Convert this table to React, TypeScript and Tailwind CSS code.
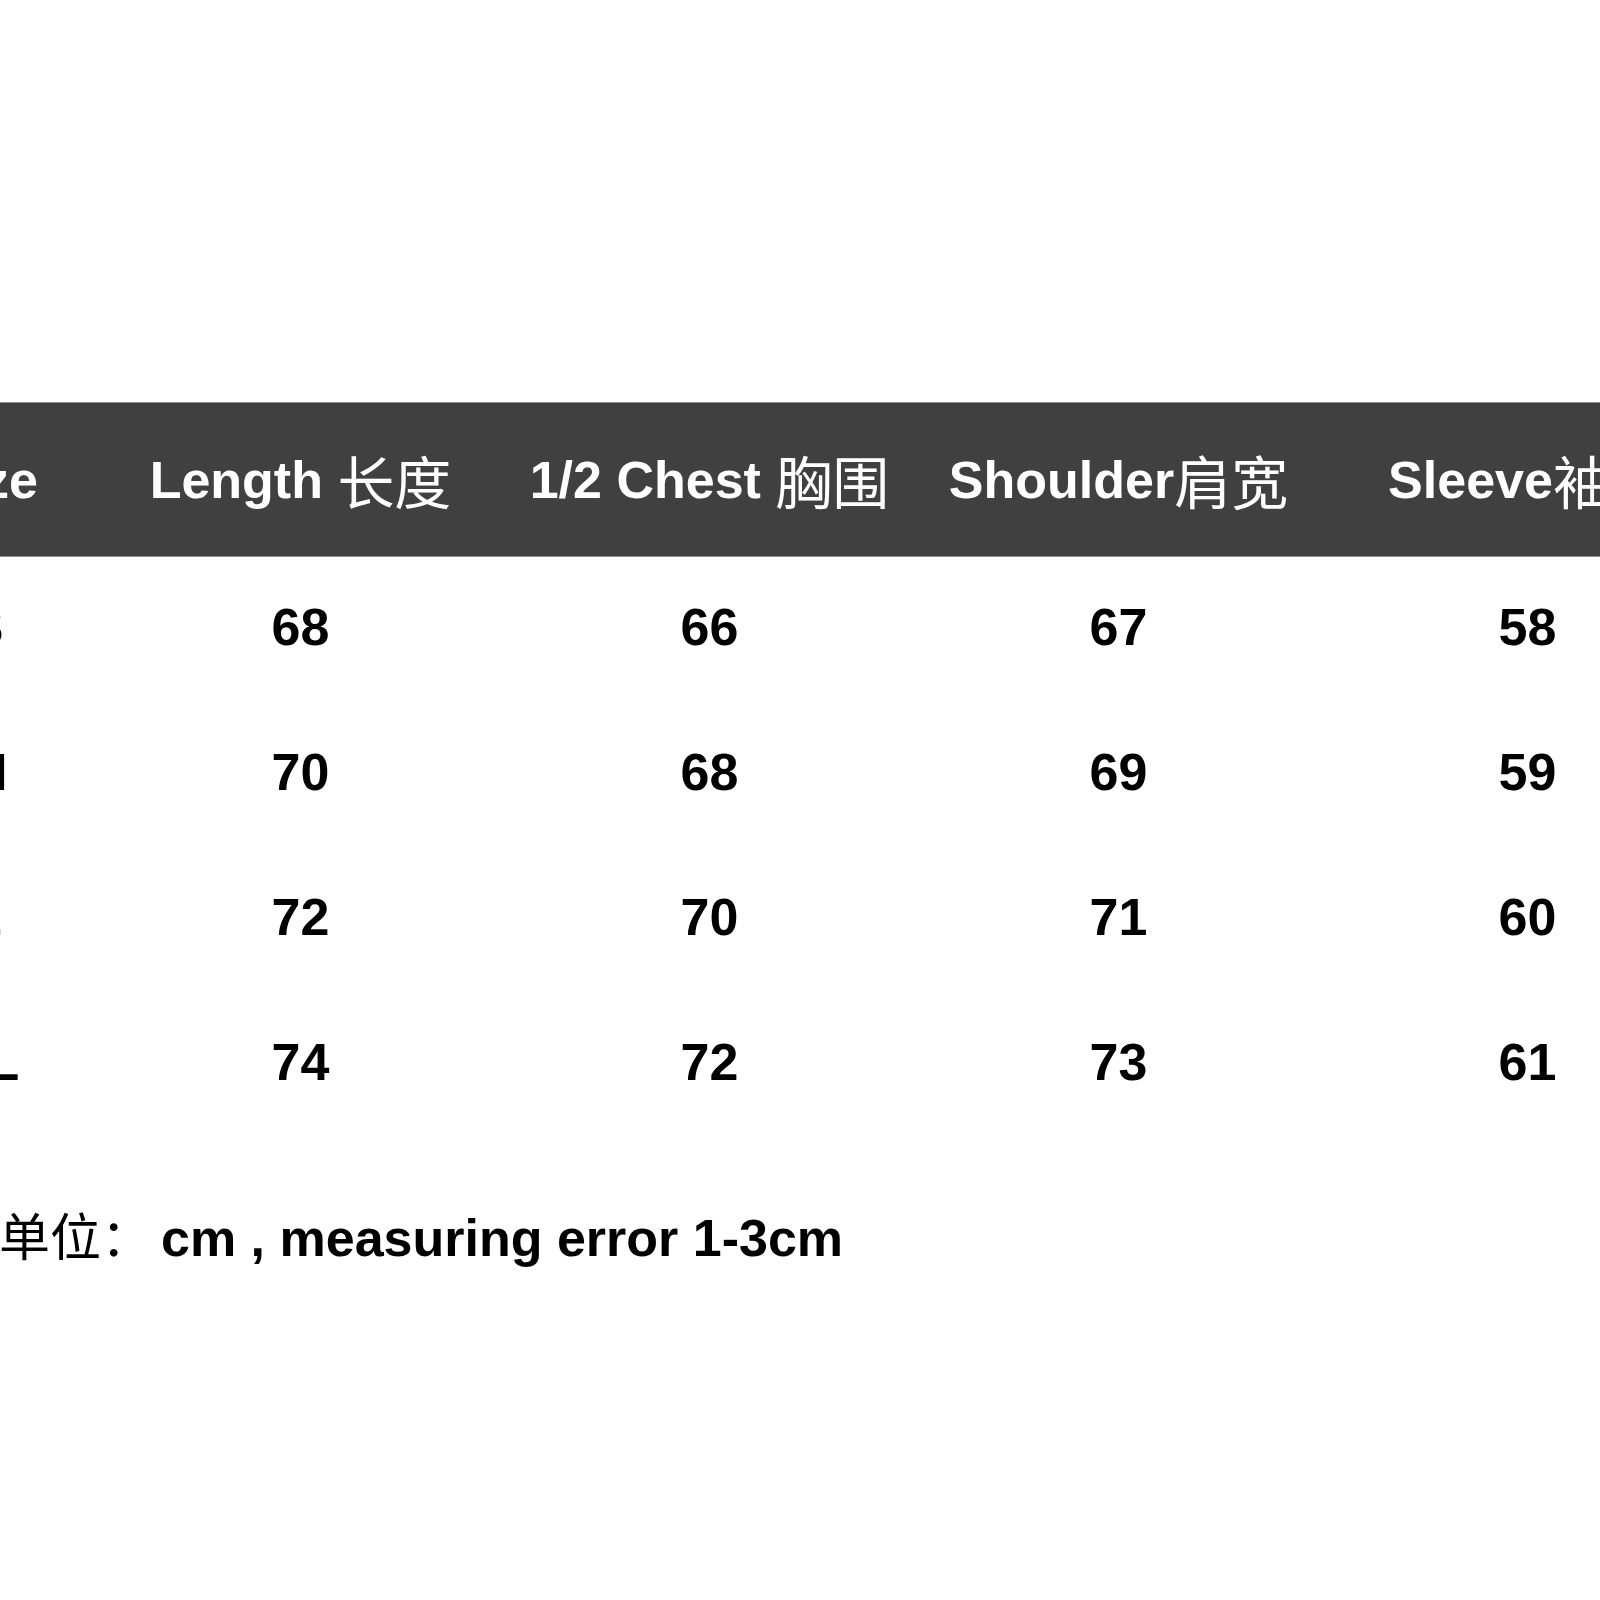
const HEADERS = [
  { en: "Size", zh: "" },
  { en: "Length\u00a0", zh: "长度" },
  { en: "1/2 Chest\u00a0", zh: "胸围" },
  { en: "Shoulder", zh: "肩宽" },
  { en: "Sleeve", zh: "袖长" },
];

const ROWS = [
  ["S", "68", "66", "67", "58"],
  ["M", "70", "68", "69", "59"],
  ["L", "72", "70", "71", "60"],
  ["XL", "74", "72", "73", "61"],
];

const COLS = "grid grid-cols-[220px_409px_409px_409px_409px] -ml-[124px]";

export default function App() {
  return (
    <div
      className="w-[1600px] h-[1600px] overflow-hidden bg-white"
      style={{ fontFamily: '"Liberation Sans", Arial, "Noto Sans CJK SC", sans-serif' }}
    >
      <div className="h-[402px]" />

      {/* Header bar */}
      <div className="bg-[#404040] border-y border-[#8e8e8e] h-[155px]">
        <div className={`${COLS} h-full`}>
          {HEADERS.map((h) => (
            <div
              key={h.en}
              className="flex items-center justify-center whitespace-pre text-white text-[52px] font-bold leading-none"
            >
              <span>{h.en}</span>
              {h.zh && (
                <span className="font-normal text-[57px]" style={{ fontFamily: '"Noto Sans CJK SC", sans-serif' }}>
                  {h.zh}
                </span>
              )}
            </div>
          ))}
        </div>
      </div>

      {/* Rows */}
      {ROWS.map((row) => (
        <div key={row[0]} className={`${COLS} h-[145px]`}>
          {row.map((cell, i) => (
            <div
              key={i}
              className="flex items-center justify-center text-black text-[52px] font-bold leading-none pb-[5px]"
            >
              {cell}
            </div>
          ))}
        </div>
      ))}

      {/* Footer note */}
      <div className="mt-[72px] flex items-baseline whitespace-nowrap text-black text-[52px] font-bold leading-none">
        <span className="font-normal text-[51px] -ml-[1px]" style={{ fontFamily: '"Noto Sans CJK SC", sans-serif' }}>
          单位：
        </span>
        <span className="ml-[9px]">cm , measuring error 1-3cm</span>
      </div>
    </div>
  );
}
